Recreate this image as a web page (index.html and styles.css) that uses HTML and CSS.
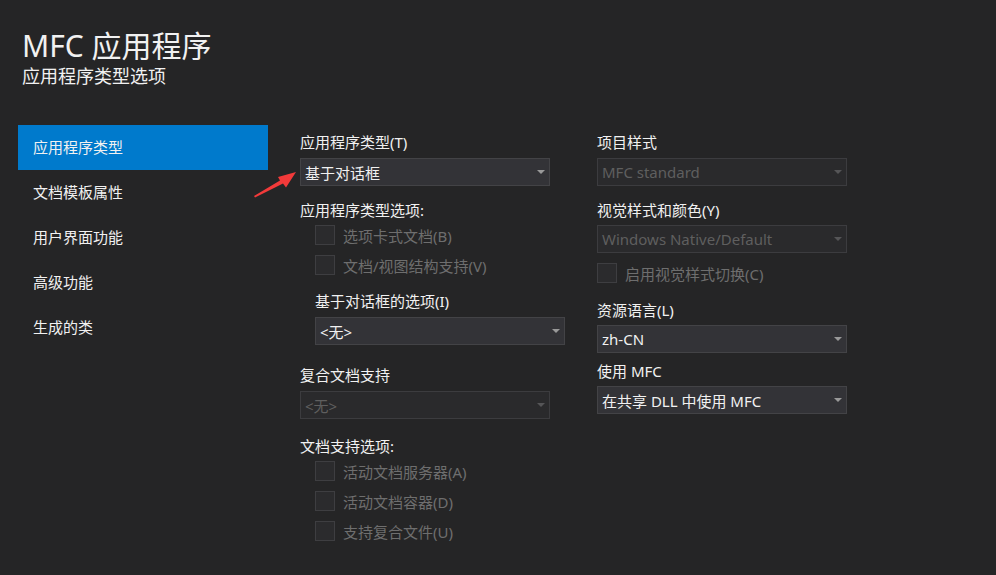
FILE: index.html
```html
<!DOCTYPE html>
<html lang="zh-CN">
<head>
<meta charset="utf-8">
<title>MFC 应用程序</title>
<link rel="stylesheet" href="styles.css">
</head>
<body>
<div class="page">
  <header class="header">
    <div class="title">MFC 应用程序</div>
    <div class="subtitle">应用程序类型选项</div>
  </header>
  <div class="content">
    <nav class="sidebar">
      <div class="nav-item active">应用程序类型</div>
      <div class="nav-item">文档模板属性</div>
      <div class="nav-item">用户界面功能</div>
      <div class="nav-item">高级功能</div>
      <div class="nav-item">生成的类</div>
    </nav>
    <main class="main">
      <section class="col col1">
        <div class="label">应用程序类型(T)</div>
        <div class="select gap6"><span>基于对话框</span><i class="caret"></i></div>

        <div class="label mt14">应用程序类型选项:</div>
        <div class="check indent"><span class="box"></span><span class="dim">选项卡式文档(B)</span></div>
        <div class="check indent"><span class="box"></span><span class="dim">文档/视图结构支持(V)</span></div>

        <div class="label indent mt11">基于对话框的选项(I)</div>
        <div class="select gap6 sub"><span>&lt;无&gt;</span><i class="caret"></i></div>

        <div class="label mt20">复合文档支持</div>
        <div class="select gap6 disabled"><span>&lt;无&gt;</span><i class="caret"></i></div>

        <div class="label mt17">文档支持选项:</div>
        <div class="check indent"><span class="box"></span><span class="dim">活动文档服务器(A)</span></div>
        <div class="check indent"><span class="box"></span><span class="dim">活动文档容器(D)</span></div>
        <div class="check indent"><span class="box"></span><span class="dim">支持复合文件(U)</span></div>
      </section>
      <section class="col col2">
        <div class="label">项目样式</div>
        <div class="select gap6 disabled"><span>MFC standard</span><i class="caret"></i></div>

        <div class="label mt14">视觉样式和颜色(Y)</div>
        <div class="select gap5 disabled"><span>Windows Native/Default</span><i class="caret"></i></div>
        <div class="check mt5"><span class="box"></span><span class="dim">启用视觉样式切换(C)</span></div>

        <div class="label mt12">资源语言(L)</div>
        <div class="select gap5"><span>zh-CN</span><i class="caret"></i></div>

        <div class="label mt8">使用 MFC</div>
        <div class="select gap5"><span>在共享 DLL 中使用 MFC</span><i class="caret"></i></div>
      </section>
    </main>
  </div>
  <svg class="pointer" width="50" height="32" viewBox="250 168 50 32" aria-hidden="true">
    <polygon fill="#f23a3a" points="254,196 280,180.5 278,177 296,172 286,187.5 283,183.5 255,197.5"/>
  </svg>
</div>
</body>
</html>
```

FILE: styles.css
```css
html, body {
  margin: 0;
  padding: 0;
}
body {
  background: #252526;
  color: #f1f1f1;
  font-family: "Noto Sans", "Noto Sans CJK SC", sans-serif;
  width: 996px;
  height: 575px;
  overflow: hidden;
}
.page {
  position: relative;
  padding-top: 28px;
  height: 547px;
}
.header {
  padding-left: 22px;
}
.title {
  font-size: 30px;
  line-height: 36px;
  color: #f1f1f1;
}
.subtitle {
  font-size: 18px;
  line-height: 22px;
  margin-top: 1px;
  color: #f1f1f1;
}
.content {
  display: flex;
  margin-top: 38px;
}
.sidebar {
  margin-left: 18px;
  width: 250px;
  flex: none;
}
.nav-item {
  height: 45px;
  line-height: 45px;
  padding-left: 15px;
  font-size: 15px;
  color: #f1f1f1;
}
.nav-item.active {
  background: #007acc;
}
.main {
  display: flex;
  margin-left: 32px;
  padding-top: 7px;
}
.col {
  display: flex;
  flex-direction: column;
  align-items: flex-start;
}
.col1 {
  width: 265px;
}
.col2 {
  width: 250px;
  margin-left: 32px;
}
.label {
  font-size: 15px;
  line-height: 20px;
  height: 20px;
  color: #f1f1f1;
  white-space: nowrap;
}
.indent {
  margin-left: 15px;
}
.mt5 { margin-top: 5px; }
.mt8 { margin-top: 8px; }
.mt11 { margin-top: 11px; }
.mt12 { margin-top: 12px; }
.mt14 { margin-top: 14px; }
.mt17 { margin-top: 17px; }
.mt20 { margin-top: 20px; }
.gap5 { margin-top: 5px; }
.gap6 { margin-top: 6px; }
.select {
  box-sizing: border-box;
  width: 250px;
  height: 28px;
  border: 1px solid #434346;
  background: #333337;
  display: flex;
  align-items: center;
  justify-content: space-between;
  padding: 0 4px 0 4px;
  font-size: 15px;
  color: #f1f1f1;
  white-space: nowrap;
}
.select.sub {
  margin-left: 15px;
}
.select.disabled {
  background: #2a2a2c;
  border-color: #3c3c3f;
  color: #5f5f5f;
}
.caret {
  width: 0;
  height: 0;
  border-left: 4px solid transparent;
  border-right: 4px solid transparent;
  border-top: 4px solid #999999;
  margin-right: 0;
}
.select.disabled .caret {
  border-top-color: #555557;
}
.check {
  display: flex;
  align-items: center;
  height: 30px;
  font-size: 15px;
  white-space: nowrap;
}
.box {
  box-sizing: border-box;
  width: 20px;
  height: 20px;
  border: 1px solid #3e3e41;
  background: #2b2b2d;
  margin-right: 8px;
  flex: none;
}
.dim {
  color: #6e6e6e;
}
.pointer {
  position: absolute;
  left: 250px;
  top: 168px;
}
```
